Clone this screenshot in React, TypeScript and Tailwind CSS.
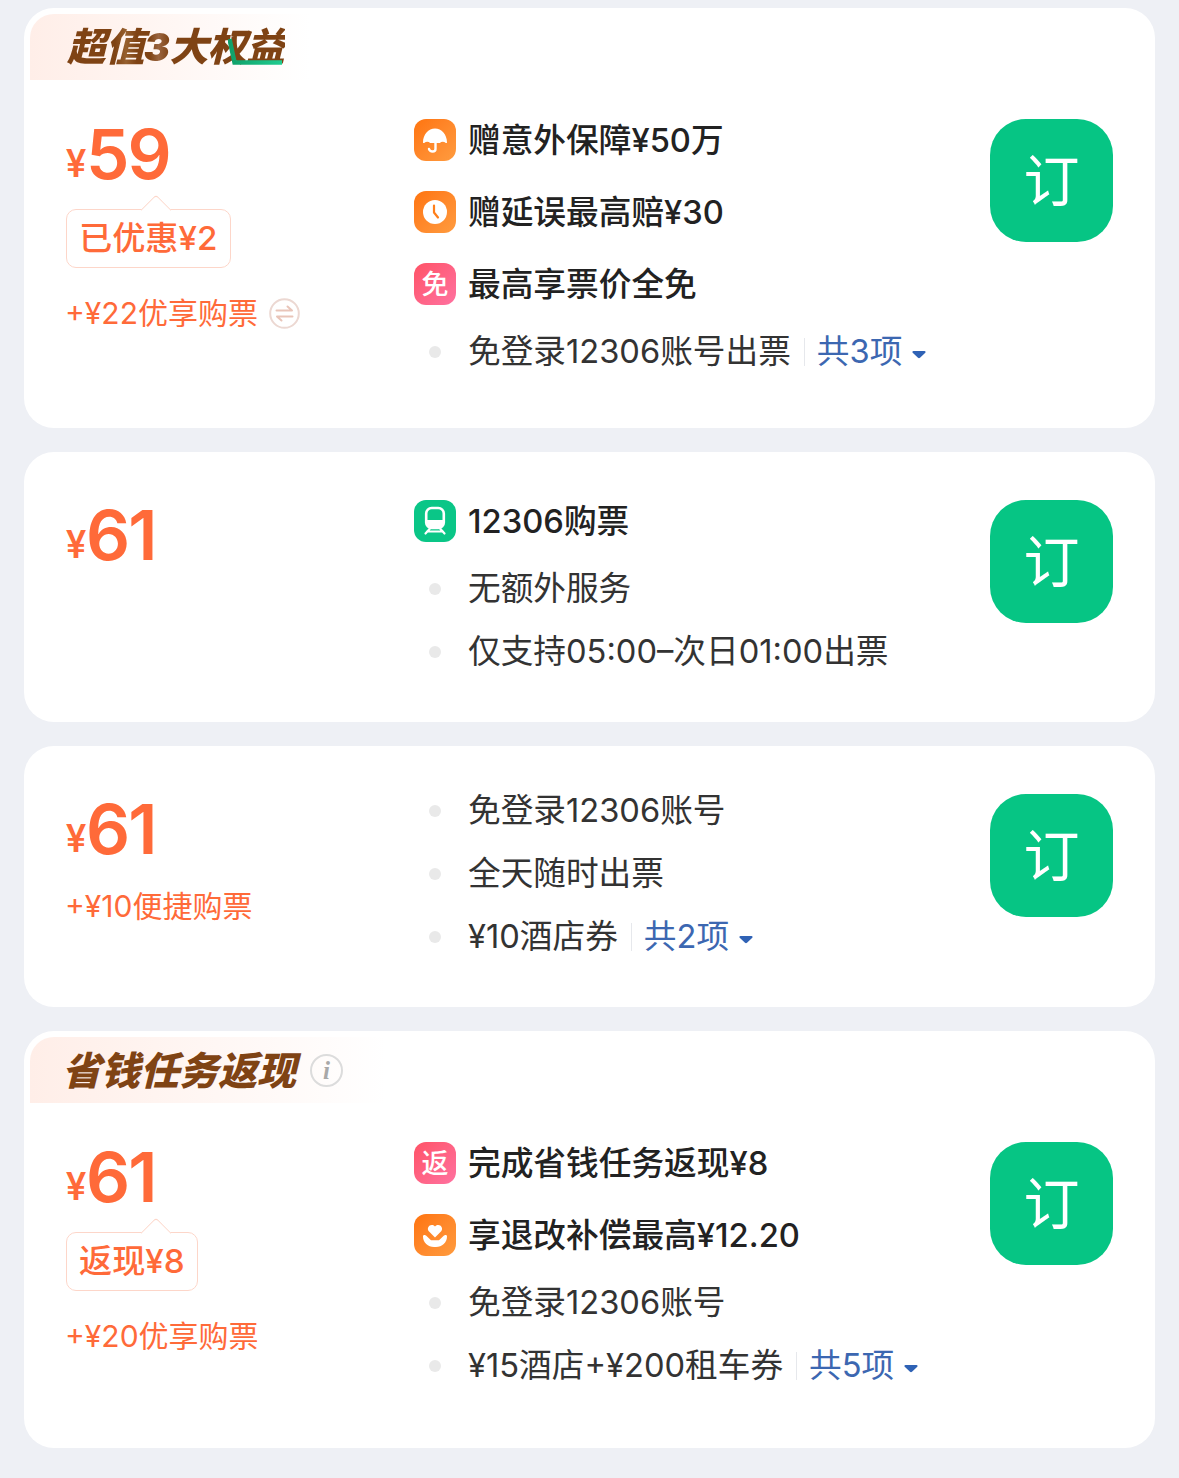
import type { ReactNode } from "react";

const FONT = "font-['Inter','Noto_Sans_CJK_SC',sans-serif]";

function IconBox({ className, children }: { className: string; children: ReactNode }) {
  return (
    <span className={`flex h-[42px] w-[42px] shrink-0 items-center justify-center rounded-[12px] ${className}`}>
      {children}
    </span>
  );
}

const ORANGE = "bg-gradient-to-br from-[#ff740c] to-[#ff9b3e]";
const PINK = "bg-gradient-to-br from-[#ff5266] to-[#ff71a0]";

function UmbrellaIcon() {
  return (
    <IconBox className={ORANGE}>
      <svg width="42" height="42" viewBox="0 0 42 42" fill="none">
        <path d="M9 23.5C9 15.5 14.5 9.5 21 9.5s12 6 12 14c0 .6-.7.8-1.2.4-2-1.4-4-1.4-6 0H16.2c-2-1.4-4-1.4-6 0-.5.4-1.2.2-1.2-.4Z" fill="#fff" />
        <path d="M21.5 22v8c0 3.4-5.5 3.4-6.5 0" stroke="#fff" strokeWidth="2.4" strokeLinecap="round" />
      </svg>
    </IconBox>
  );
}

function ClockIcon() {
  return (
    <IconBox className={ORANGE}>
      <svg width="42" height="42" viewBox="0 0 42 42" fill="none">
        <circle cx="21" cy="21" r="12" fill="#fff" />
        <path d="M20 14.5V21.5L24 26.5" stroke="#ff7f1a" strokeWidth="2.2" strokeLinecap="round" strokeLinejoin="round" />
      </svg>
    </IconBox>
  );
}

function TrainIcon() {
  return (
    <IconBox className="bg-[#0ac687]">
      <svg width="42" height="42" viewBox="0 0 42 42" fill="none">
        <rect x="12.2" y="8" width="17.6" height="20" rx="5.5" stroke="#fff" strokeWidth="2.6" />
        <path d="M13 20H29V24.5C29 26.5 27.5 28 25.5 28H16.5C14.5 28 13 26.5 13 24.5Z" fill="#fff" />
        <path d="M16 28.5L11.5 33.5M26 28.5L30.5 33.5M13 31.5H29" stroke="#fff" strokeWidth="2.2" strokeLinecap="round" />
      </svg>
    </IconBox>
  );
}

function HeartHandIcon() {
  return (
    <IconBox className={ORANGE}>
      <svg width="42" height="42" viewBox="0 0 42 42" fill="none">
        <path d="M21 23.5 14.8 17.3C11.8 13.8 16.9 8.4 21 12.6 25.1 8.4 30.2 13.8 27.2 17.3Z" fill="#fff" />
        <path d="M9 22.5C9 21 11 20.6 12 21.6L17 26.2H25L30 21.6C31 20.6 33 21 33 22.5 33 28.5 28 33 22 33H20C14 33 9 28.5 9 22.5Z" fill="#fff" />
      </svg>
    </IconBox>
  );
}

function LetterIcon({ label }: { label: string }) {
  return (
    <IconBox className={PINK}>
      <span className="text-[27px] leading-none font-medium text-white">{label}</span>
    </IconBox>
  );
}

function BoldRow({ icon, text }: { icon: ReactNode; text: string }) {
  return (
    <div className="mb-[30px] flex h-[42px] items-center gap-3">
      {icon}
      <span className="text-[32.7px] leading-none font-medium whitespace-nowrap text-[#222222]">{text}</span>
    </div>
  );
}

function PlainRow({ text, more }: { text: string; more?: string }) {
  return (
    <div className="mb-[29px] flex h-[34px] items-center gap-3">
      <span className="flex w-[42px] shrink-0 justify-center">
        <span className="h-3 w-3 rounded-full bg-[#e9e9e9]" />
      </span>
      <span className="pb-[2px] text-[32.67px] leading-none whitespace-nowrap text-[#333333]">{text}</span>
      {more && (
        <>
          <span className="ml-px h-7 w-px bg-[#e6e8ec]" />
          <span className="flex items-center gap-[10px] pb-[2px] text-[32.67px] leading-none whitespace-nowrap text-[#3c67b1]">
            {more}
            <svg width="14" height="9" viewBox="0 0 14 9" className="mt-[6px]">
              <path d="M1.5 1h11c1 0 1.4 1 .8 1.7L8 7.8c-.6.6-1.4.6-2 0L.7 2.7C.1 2 .5 1 1.5 1Z" fill="#2f62b5" />
            </svg>
          </span>
        </>
      )}
    </div>
  );
}

function Price({ value }: { value: string }) {
  return (
    <div className="flex h-[70px] items-end font-semibold text-[#ff6a39]">
      <span className="mb-[6px] w-[20px] font-['Roboto',sans-serif] text-[38px] leading-none font-medium">¥</span>
      <span className="text-[69px] leading-[70px] tracking-[-2px]">{value}</span>
    </div>
  );
}

function Tag({ text }: { text: string }) {
  return (
    <div className="relative mt-5 h-[59px] w-fit rounded-[10px] border border-[#fdd6c9] bg-white px-3">
      <span className="absolute top-[-11px] left-[78px] h-[22px] w-[22px] rotate-45 rounded-tl-[4px] border-t border-l border-[#fdd6c9] bg-white" />
      <span className="relative flex h-full items-center text-[33.2px] leading-none font-medium whitespace-nowrap text-[#ff6a39]">
        {text}
      </span>
    </div>
  );
}

function Extra({ text, swap, withTag }: { text: string; swap?: boolean; withTag?: boolean }) {
  return (
    <div className={`flex h-9 items-center gap-[11px] ${withTag ? "mt-[27px]" : "mt-6"}`}>
      <span className="-ml-px text-[30px] leading-none whitespace-nowrap text-[#ff6a39]">{text}</span>
      {swap && (
        <svg width="31" height="31" viewBox="0 0 31 31" fill="none">
          <circle cx="15.5" cy="15.5" r="14.3" stroke="#ecd8d2" strokeWidth="2" />
          <path d="M7.5 12.5H23L18.5 8.5M23.5 18.5H8L12.5 22.5" stroke="#e9c5b9" strokeWidth="2" strokeLinecap="round" strokeLinejoin="round" />
        </svg>
      )}
    </div>
  );
}

function BookButton() {
  return (
    <div className="flex h-[123px] w-[123px] shrink-0 items-center justify-center rounded-[36px] bg-[#06c584] text-[56px] leading-none text-white">
      订
    </div>
  );
}

function Card({
  header,
  left,
  rows,
  bodyClass,
}: {
  header?: ReactNode;
  left: ReactNode;
  rows: ReactNode;
  bodyClass: string;
}) {
  return (
    <section className="overflow-hidden rounded-[30px] bg-white">
      {header}
      <div className={`flex pr-[42px] pl-[42px] ${bodyClass}`}>
        <div className="w-[348px] shrink-0">{left}</div>
        <div className="flex-1">{rows}</div>
        <BookButton />
      </div>
    </section>
  );
}

function BenefitHeader() {
  return (
    <div className="relative mt-[6px] ml-[6px] flex h-[66px] w-[280px] items-center rounded-tl-[24px] bg-gradient-to-r from-[#ffeee8] to-white pb-[2px] pl-[37px]">
      <span className="bg-[linear-gradient(90deg,#7f4314_0%,#7f4314_22%,#96602f_27%,#7f4314_32%,#7f4314_38%,#9a6540_42%,#7f4314_47%,#7f4314_100%)] bg-clip-text text-[39px] leading-none font-black tracking-[-0.6px] whitespace-nowrap text-transparent italic">
        超值3大权益
      </span>
      <svg width="60" height="30" viewBox="0 0 60 30" fill="none" className="absolute top-[22px] left-[198px]">
        <defs>
          <linearGradient id="benefit-line" x1="0" y1="0" x2="1" y2="0">
            <stop offset="0" stopColor="#0f9f68" />
            <stop offset="1" stopColor="#20cc90" />
          </linearGradient>
        </defs>
        <path d="M1.5 3 6.5 26.5H54" stroke="url(#benefit-line)" strokeWidth="4.5" />
      </svg>
    </div>
  );
}

function TaskHeader() {
  return (
    <div className="mt-[6px] ml-[6px] flex h-[66px] w-[356px] items-center gap-[14px] rounded-tl-[24px] bg-gradient-to-r from-[#ffeee8] to-white pl-8">
      <span className="text-[39px] leading-none font-black whitespace-nowrap text-[#7f4314] italic">省钱任务返现</span>
      <span className="flex h-[33px] w-[33px] items-center justify-center rounded-full border-2 border-[#dcdcdc] font-['Liberation_Serif',serif] text-[25px] leading-none font-bold text-[#a8a8a8] italic">
        i
      </span>
    </div>
  );
}

export default function App() {
  return (
    <div className={`flex min-h-[1478px] flex-col gap-6 bg-[#eef0f5] pt-2 pr-6 pl-6 ${FONT}`}>
      <Card
        header={<BenefitHeader />}
        bodyClass="pt-[39px] h-[348px]"
        left={
          <>
            <Price value="59" />
            <Tag text="已优惠¥2" />
            <Extra text="+¥22优享购票" swap withTag />
          </>
        }
        rows={
          <>
            <BoldRow icon={<UmbrellaIcon />} text="赠意外保障¥50万" />
            <BoldRow icon={<ClockIcon />} text="赠延误最高赔¥30" />
            <BoldRow icon={<LetterIcon label="免" />} text="最高享票价全免" />
            <PlainRow text="免登录12306账号出票" more="共3项" />
          </>
        }
      />
      <Card
        bodyClass="pt-12 h-[270px]"
        left={<Price value="61" />}
        rows={
          <>
            <BoldRow icon={<TrainIcon />} text="12306购票" />
            <PlainRow text="无额外服务" />
            <PlainRow text="仅支持05:00–次日01:00出票" />
          </>
        }
      />
      <Card
        bodyClass="pt-12 h-[261px]"
        left={
          <>
            <Price value="61" />
            <Extra text="+¥10便捷购票" />
          </>
        }
        rows={
          <>
            <PlainRow text="免登录12306账号" />
            <PlainRow text="全天随时出票" />
            <PlainRow text="¥10酒店券" more="共2项" />
          </>
        }
      />
      <Card
        header={<TaskHeader />}
        bodyClass="pt-[39px] h-[345px]"
        left={
          <>
            <Price value="61" />
            <Tag text="返现¥8" />
            <Extra text="+¥20优享购票" withTag />
          </>
        }
        rows={
          <>
            <BoldRow icon={<LetterIcon label="返" />} text="完成省钱任务返现¥8" />
            <BoldRow icon={<HeartHandIcon />} text="享退改补偿最高¥12.20" />
            <PlainRow text="免登录12306账号" />
            <PlainRow text="¥15酒店+¥200租车券" more="共5项" />
          </>
        }
      />
    </div>
  );
}
